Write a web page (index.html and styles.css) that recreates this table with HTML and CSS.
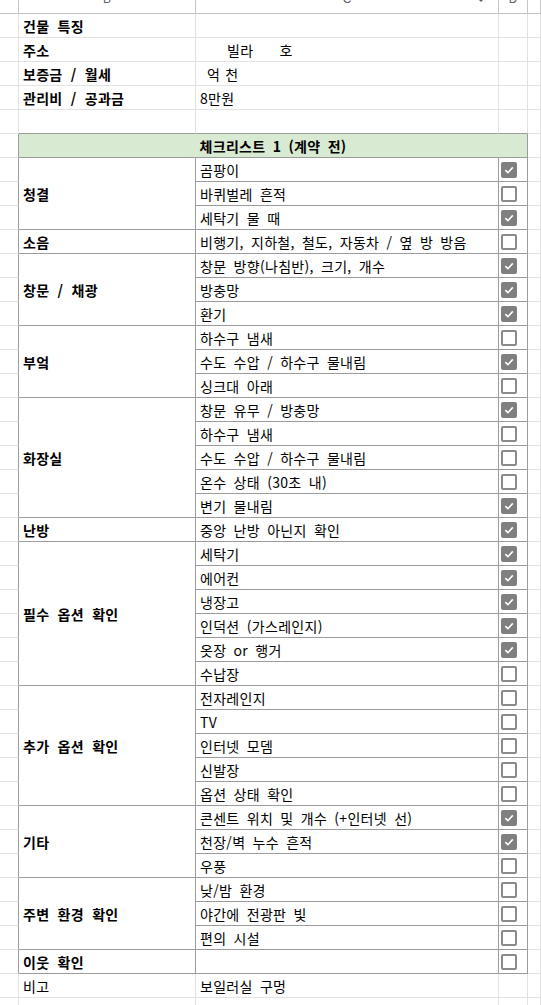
FILE: index.html
```html
<!DOCTYPE html>
<html lang="ko">
<head>
<meta charset="utf-8">
<title>체크리스트</title>
<link rel="stylesheet" href="styles.css">
</head>
<body>
<div class="sheet">
  <div class="hd"></div>
  <div class="hd"><span class="letter">B</span></div>
  <div class="hd"><span class="letter">C</span><svg class="filter" width="8" height="5" viewBox="0 0 8 5"><path d="M0 0H8L4 4Z" fill="#5f6368"/></svg></div>
  <div class="hd"><span class="letter">D</span></div>
  <div class="hd"></div>

  <div class="c"></div><div class="c b">건물 특징</div><div class="c"></div><div class="c"></div><div class="c"></div>
  <div class="c"></div><div class="c b">주소</div><div class="c"><span class="sp1">빌라</span><span class="sp2">호</span></div><div class="c"></div><div class="c"></div>
  <div class="c"></div><div class="c b">보증금 / 월세</div><div class="c"><span class="sp3">억</span><span class="sp4">천</span></div><div class="c"></div><div class="c"></div>
  <div class="c"></div><div class="c b">관리비 / 공과금</div><div class="c">8만원</div><div class="c"></div><div class="c"></div>
  <div class="c"></div><div class="c tt"></div><div class="c tt"></div><div class="c tt"></div><div class="c"></div>

  <div class="c tl"></div><div class="c t title">체크리스트 1 (계약 전)</div><div class="c"></div>

  <div class="c tl"></div><div class="c t b r3">청결</div><div class="c t">곰팡이</div><div class="c t chk"><span class="box on"><svg width="12" height="12" viewBox="0 0 12 12"><path d="M2.3 6.2 4.9 8.7 9.8 3.4" fill="none" stroke="#fff" stroke-width="1.6"/></svg></span></div><div class="c"></div>
  <div class="c tl"></div><div class="c t">바퀴벌레 흔적</div><div class="c t chk"><span class="box"></span></div><div class="c"></div>
  <div class="c tl"></div><div class="c t">세탁기 물 때</div><div class="c t chk"><span class="box on"><svg width="12" height="12" viewBox="0 0 12 12"><path d="M2.3 6.2 4.9 8.7 9.8 3.4" fill="none" stroke="#fff" stroke-width="1.6"/></svg></span></div><div class="c"></div>

  <div class="c tl"></div><div class="c t b">소음</div><div class="c t">비행기, 지하철, 철도, 자동차 / 옆 방 방음</div><div class="c t chk"><span class="box"></span></div><div class="c"></div>

  <div class="c tl"></div><div class="c t b r3">창문 / 채광</div><div class="c t">창문 방향(나침반), 크기, 개수</div><div class="c t chk"><span class="box on"><svg width="12" height="12" viewBox="0 0 12 12"><path d="M2.3 6.2 4.9 8.7 9.8 3.4" fill="none" stroke="#fff" stroke-width="1.6"/></svg></span></div><div class="c"></div>
  <div class="c tl"></div><div class="c t">방충망</div><div class="c t chk"><span class="box on"><svg width="12" height="12" viewBox="0 0 12 12"><path d="M2.3 6.2 4.9 8.7 9.8 3.4" fill="none" stroke="#fff" stroke-width="1.6"/></svg></span></div><div class="c"></div>
  <div class="c tl"></div><div class="c t">환기</div><div class="c t chk"><span class="box on"><svg width="12" height="12" viewBox="0 0 12 12"><path d="M2.3 6.2 4.9 8.7 9.8 3.4" fill="none" stroke="#fff" stroke-width="1.6"/></svg></span></div><div class="c"></div>

  <div class="c tl"></div><div class="c t b r3">부엌</div><div class="c t">하수구 냄새</div><div class="c t chk"><span class="box"></span></div><div class="c"></div>
  <div class="c tl"></div><div class="c t">수도 수압 / 하수구 물내림</div><div class="c t chk"><span class="box on"><svg width="12" height="12" viewBox="0 0 12 12"><path d="M2.3 6.2 4.9 8.7 9.8 3.4" fill="none" stroke="#fff" stroke-width="1.6"/></svg></span></div><div class="c"></div>
  <div class="c tl"></div><div class="c t">싱크대 아래</div><div class="c t chk"><span class="box"></span></div><div class="c"></div>

  <div class="c tl"></div><div class="c t b r5">화장실</div><div class="c t">창문 유무 / 방충망</div><div class="c t chk"><span class="box on"><svg width="12" height="12" viewBox="0 0 12 12"><path d="M2.3 6.2 4.9 8.7 9.8 3.4" fill="none" stroke="#fff" stroke-width="1.6"/></svg></span></div><div class="c"></div>
  <div class="c tl"></div><div class="c t">하수구 냄새</div><div class="c t chk"><span class="box"></span></div><div class="c"></div>
  <div class="c tl"></div><div class="c t">수도 수압 / 하수구 물내림</div><div class="c t chk"><span class="box"></span></div><div class="c"></div>
  <div class="c tl"></div><div class="c t">온수 상태 (30초 내)</div><div class="c t chk"><span class="box"></span></div><div class="c"></div>
  <div class="c tl"></div><div class="c t">변기 물내림</div><div class="c t chk"><span class="box on"><svg width="12" height="12" viewBox="0 0 12 12"><path d="M2.3 6.2 4.9 8.7 9.8 3.4" fill="none" stroke="#fff" stroke-width="1.6"/></svg></span></div><div class="c"></div>

  <div class="c tl"></div><div class="c t b">난방</div><div class="c t">중앙 난방 아닌지 확인</div><div class="c t chk"><span class="box on"><svg width="12" height="12" viewBox="0 0 12 12"><path d="M2.3 6.2 4.9 8.7 9.8 3.4" fill="none" stroke="#fff" stroke-width="1.6"/></svg></span></div><div class="c"></div>

  <div class="c tl"></div><div class="c t b r6">필수 옵션 확인</div><div class="c t">세탁기</div><div class="c t chk"><span class="box on"><svg width="12" height="12" viewBox="0 0 12 12"><path d="M2.3 6.2 4.9 8.7 9.8 3.4" fill="none" stroke="#fff" stroke-width="1.6"/></svg></span></div><div class="c"></div>
  <div class="c tl"></div><div class="c t">에어컨</div><div class="c t chk"><span class="box on"><svg width="12" height="12" viewBox="0 0 12 12"><path d="M2.3 6.2 4.9 8.7 9.8 3.4" fill="none" stroke="#fff" stroke-width="1.6"/></svg></span></div><div class="c"></div>
  <div class="c tl"></div><div class="c t">냉장고</div><div class="c t chk"><span class="box on"><svg width="12" height="12" viewBox="0 0 12 12"><path d="M2.3 6.2 4.9 8.7 9.8 3.4" fill="none" stroke="#fff" stroke-width="1.6"/></svg></span></div><div class="c"></div>
  <div class="c tl"></div><div class="c t">인덕션 (가스레인지)</div><div class="c t chk"><span class="box on"><svg width="12" height="12" viewBox="0 0 12 12"><path d="M2.3 6.2 4.9 8.7 9.8 3.4" fill="none" stroke="#fff" stroke-width="1.6"/></svg></span></div><div class="c"></div>
  <div class="c tl"></div><div class="c t">옷장 or 행거</div><div class="c t chk"><span class="box on"><svg width="12" height="12" viewBox="0 0 12 12"><path d="M2.3 6.2 4.9 8.7 9.8 3.4" fill="none" stroke="#fff" stroke-width="1.6"/></svg></span></div><div class="c"></div>
  <div class="c tl"></div><div class="c t">수납장</div><div class="c t chk"><span class="box"></span></div><div class="c"></div>

  <div class="c tl"></div><div class="c t b r5">추가 옵션 확인</div><div class="c t">전자레인지</div><div class="c t chk"><span class="box"></span></div><div class="c"></div>
  <div class="c tl"></div><div class="c t">TV</div><div class="c t chk"><span class="box"></span></div><div class="c"></div>
  <div class="c tl"></div><div class="c t">인터넷 모뎀</div><div class="c t chk"><span class="box"></span></div><div class="c"></div>
  <div class="c tl"></div><div class="c t">신발장</div><div class="c t chk"><span class="box"></span></div><div class="c"></div>
  <div class="c tl"></div><div class="c t">옵션 상태 확인</div><div class="c t chk"><span class="box"></span></div><div class="c"></div>

  <div class="c tl"></div><div class="c t b r3">기타</div><div class="c t">콘센트 위치 및 개수 (+인터넷 선)</div><div class="c t chk"><span class="box on"><svg width="12" height="12" viewBox="0 0 12 12"><path d="M2.3 6.2 4.9 8.7 9.8 3.4" fill="none" stroke="#fff" stroke-width="1.6"/></svg></span></div><div class="c"></div>
  <div class="c tl"></div><div class="c t">천장/벽 누수 흔적</div><div class="c t chk"><span class="box on"><svg width="12" height="12" viewBox="0 0 12 12"><path d="M2.3 6.2 4.9 8.7 9.8 3.4" fill="none" stroke="#fff" stroke-width="1.6"/></svg></span></div><div class="c"></div>
  <div class="c tl"></div><div class="c t">우풍</div><div class="c t chk"><span class="box"></span></div><div class="c"></div>

  <div class="c tl"></div><div class="c t b r3">주변 환경 확인</div><div class="c t">낮/밤 환경</div><div class="c t chk"><span class="box"></span></div><div class="c"></div>
  <div class="c tl"></div><div class="c t">야간에 전광판 빛</div><div class="c t chk"><span class="box"></span></div><div class="c"></div>
  <div class="c tl"></div><div class="c t">편의 시설</div><div class="c t chk"><span class="box"></span></div><div class="c"></div>

  <div class="c tl"></div><div class="c t b">이웃 확인</div><div class="c t"></div><div class="c t chk"><span class="box"></span></div><div class="c"></div>

  <div class="c"></div><div class="c">비고</div><div class="c">보일러실 구멍</div><div class="c"></div><div class="c"></div>
  <div class="c"></div><div class="c"></div><div class="c"></div><div class="c"></div><div class="c"></div>
</div>
</body>
</html>
```

FILE: styles.css
```css
html, body {
  margin: 0;
  padding: 0;
  background: #fff;
  overflow: hidden;
}

body {
  font-family: "Noto Sans CJK KR", "Noto Sans", sans-serif;
  font-size: 14px;
  color: #000;
}

.sheet {
  display: grid;
  grid-template-columns: 19px 177px 303px 29px 13px;
  grid-template-rows: 14px;
  grid-auto-rows: 24px;
}

.hd {
  box-sizing: border-box;
  border-right: 1px solid #c7c7c7;
  border-bottom: 1px solid #c4c4c4;
  overflow: hidden;
  display: flex;
  justify-content: center;
  align-items: flex-end;
  position: relative;
}

.letter {
  font-family: "Liberation Sans", Arial, sans-serif;
  font-size: 12px;
  line-height: 12px;
  color: #5f6368;
  margin-bottom: 8px;
}

.filter {
  position: absolute;
  right: 13px;
  top: -2px;
}

.c {
  box-sizing: border-box;
  border-right: 1px solid #e2e2e2;
  border-bottom: 1px solid #e2e2e2;
  display: flex;
  align-items: center;
  padding-left: 4px;
  white-space: pre;
  overflow: hidden;
  line-height: 1;
  letter-spacing: 0.3px;
  word-spacing: 3px;
}

.b {
  font-weight: 700;
  word-spacing: 4px;
}

.t {
  border-right-color: #9c9c9c;
  border-bottom-color: #9c9c9c;
}

.tl {
  border-right-color: #9c9c9c;
}

.tt {
  border-bottom-color: #9c9c9c;
}

.title {
  grid-column: span 3;
  justify-content: center;
  padding-left: 0;
  background: #d9ead3;
  font-weight: 700;
}

.r3 { grid-row: span 3; }
.r5 { grid-row: span 5; }
.r6 { grid-row: span 6; }

.sp1 { margin-left: 27px; }
.sp2 { margin-left: 26px; }
.sp3 { margin-left: 7px; }
.sp4 { margin-left: 5px; }

.chk {
  padding-left: 2px;
}

.box {
  box-sizing: border-box;
  width: 16px;
  height: 16px;
  border: 2px solid #8a8a8a;
  border-radius: 2px;
  background: #fff;
  display: flex;
}

.box.on {
  background: #7f7f7f;
  border-color: #7f7f7f;
}
```
